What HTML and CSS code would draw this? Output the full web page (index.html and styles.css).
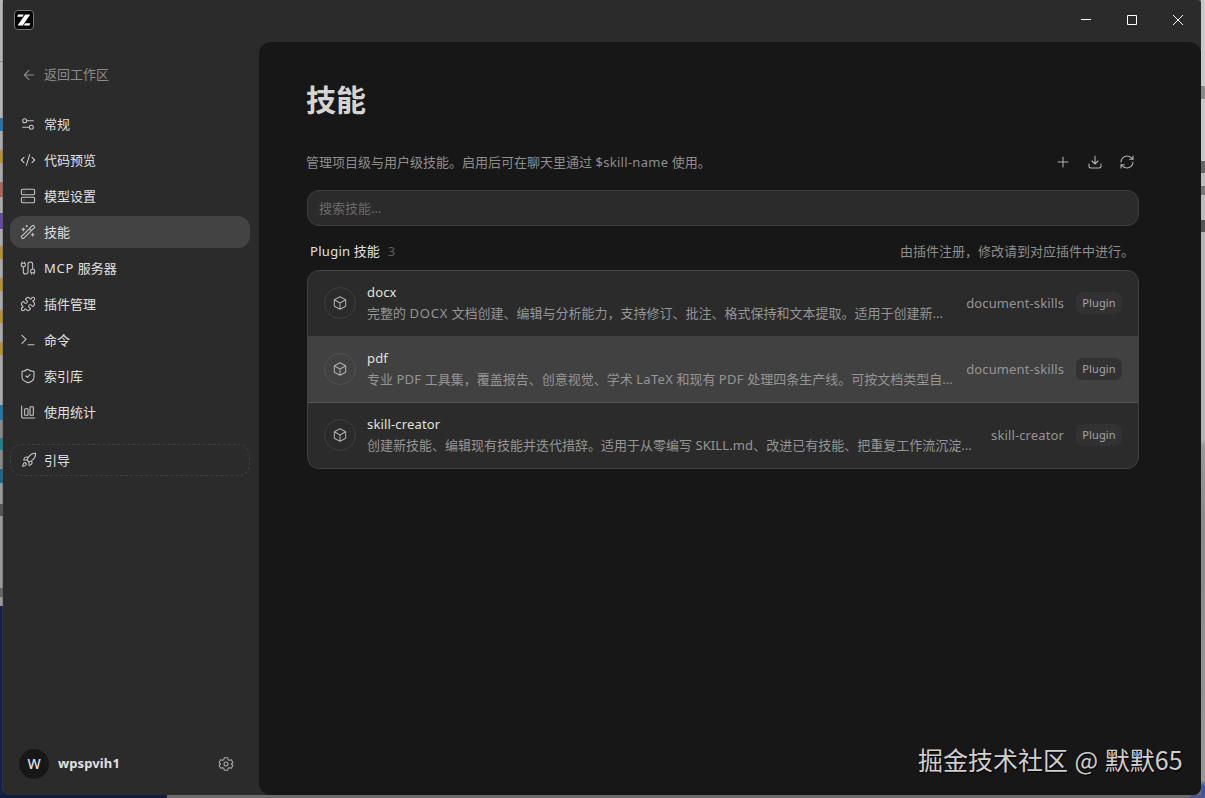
FILE: index.html
```
<!DOCTYPE html>
<html lang="zh-CN">
<head>
<meta charset="utf-8">
<title>技能</title>
<link rel="stylesheet" href="styles.css">
</head>
<body>
<svg class="defs" width="0" height="0">
  <symbol id="box" viewBox="0 0 24 24"><path d="M12 2.500 20.500 7v10L12 21.500 3.500 17V7zM3.500 7 12 12l8.500-5M12 12v9.500"/></symbol>
</svg>
<div class="desktop">
  <div class="edge edge-left"></div>
  <div class="window">
    <header class="titlebar">
      <svg class="logo" viewBox="0 0 20 20"><rect x=".5" y=".5" width="19" height="19" rx="3.500" fill="#000" stroke="#777"/><path d="M4 4.500h5.800L8.600 6.700H3.200zM11.200 4.500h5L8.800 15.500H3.500zM11.200 13.300h5.200l-1 2.200H9.700z" fill="#fff"/></svg>
      <div class="controls">
        <svg viewBox="0 0 12 12"><path d="M1 5.500h10"/></svg>
        <svg viewBox="0 0 12 12"><path d="M1.500 1.500h9v9h-9z"/></svg>
        <svg viewBox="0 0 12 12"><path d="m1 1 10 10M11 1 1 11"/></svg>
      </div>
    </header>
    <div class="body">
      <aside class="sidebar">
        <a class="back"><svg class="ic" viewBox="0 0 24 24"><path d="m12 19-7-7 7-7M19 12H5"/></svg>返回工作区</a>
        <nav class="nav">
          <a class="item"><svg class="ic" viewBox="0 0 24 24"><path d="M14 17H4M20 7h-10"/><circle cx="17" cy="17" r="3"/><circle cx="7" cy="7" r="3"/></svg>常规</a>
          <a class="item"><svg class="ic" viewBox="0 0 24 24"><path d="m18 16 4-4-4-4M6 8l-4 4 4 4M14.500 4l-5 16"/></svg>代码预览</a>
          <a class="item"><svg class="ic" viewBox="0 0 24 24"><rect x="2" y="2" width="20" height="8" rx="2"/><rect x="2" y="14" width="20" height="8" rx="2"/><path d="M6 6h.01M6 18h.01"/></svg>模型设置</a>
          <a class="item active"><svg class="ic" viewBox="0 0 24 24"><path d="m21.640 3.640-1.280-1.280a1.210 1.210 0 0 0-1.720 0L2.360 18.640a1.210 1.210 0 0 0 0 1.720l1.280 1.280a1.200 1.200 0 0 0 1.720 0L21.640 5.360a1.200 1.200 0 0 0 0-1.720M14 7l3 3M5 6v4M19 14v4M10 2v2M7 8H3M21 16h-4M11 3H9"/></svg>技能</a>
          <a class="item"><svg class="ic" viewBox="0 0 24 24"><path d="M17 19a1 1 0 0 1-1-1v-2a2 2 0 0 1 2-2h2a2 2 0 0 1 2 2v2a1 1 0 0 1-1 1zM17 21v-2M19 14V6.500a1 1 0 0 0-7 0v11a1 1 0 0 1-7 0V10M21 21v-2M3 5V3M4 10a2 2 0 0 1-2-2V6a1 1 0 0 1 1-1h4a1 1 0 0 1 1 1v2a2 2 0 0 1-2 2zM7 5V3"/></svg><span><span class="caps">MCP</span> 服务器</span></a>
          <a class="item"><svg class="ic" viewBox="0 0 24 24"><path d="M15.390 4.390a1 1 0 0 0 1.680-.474 2.500 2.500 0 1 1 3.014 3.015 1 1 0 0 0-.474 1.680l1.683 1.682a2.414 2.414 0 0 1 0 3.414L19.610 15.390a1 1 0 0 1-1.680-.474 2.500 2.500 0 1 0-3.014 3.015 1 1 0 0 1 .474 1.680l-1.683 1.682a2.414 2.414 0 0 1-3.414 0L8.610 19.610a1 1 0 0 0-1.680.474 2.500 2.500 0 1 1-3.014-3.015 1 1 0 0 0 .474-1.680l-1.683-1.682a2.414 2.414 0 0 1 0-3.414L4.390 8.610a1 1 0 0 1 1.680.474 2.500 2.500 0 1 0 3.014-3.015 1 1 0 0 1-.474-1.680l1.683-1.682a2.414 2.414 0 0 1 3.414 0z"/></svg>插件管理</a>
          <a class="item"><svg class="ic" viewBox="0 0 24 24"><path d="M12 19h9M3 17l6-6-6-6"/></svg>命令</a>
          <a class="item"><svg class="ic" viewBox="0 0 24 24"><path d="M21 13c0 5-3.500 7.500-8.340 8.950a1 1 0 0 1-.67-.01C7.500 20.500 3 18 3 13V6a1 1 0 0 1 1-1c2 0 4.500-1.200 6.240-2.720a1.170 1.170 0 0 1 1.520 0C14.510 3.810 18 5 20 5a1 1 0 0 1 1 1zM9 12l2 2 4-4"/></svg>索引库</a>
          <a class="item"><svg class="ic" viewBox="0 0 24 24"><path d="M2.500 3v16a2 2 0 0 0 2 2H22"/><rect x="15" y="4" width="5" height="13" rx="1"/><rect x="7" y="7" width="5" height="10" rx="1"/></svg>使用统计</a>
        </nav>
        <a class="item guide"><svg class="ic" viewBox="0 0 24 24"><path d="M4.500 16.500c-1.500 1.260-2 5-2 5s3.740-.5 5-2c.71-.84.7-2.130-.09-2.910a2.180 2.180 0 0 0-2.910-.09M12 15l-3-3a22 22 0 0 1 2-3.950A12.880 12.880 0 0 1 22 2c0 2.720-.78 7.500-6 11a22.350 22.350 0 0 1-4 2M9 12H4s.55-3.030 2-4c1.620-1.080 5 0 5 0M12 15v5s3.030-.55 4-2c1.080-1.620 0-5 0-5"/></svg>引导</a>
        <div class="user">
          <span class="avatar">W</span><b class="username">wpspvih1</b>
          <svg class="ic gear" viewBox="0 0 24 24"><path d="M9.500 2.500h5l.8 3 1.700 1 3-.9 2.300 4.200-2.200 2.200 2.200 2.200-2.300 4.200-3-.9-1.700 1-.8 3h-5l-.8-3-1.700-1-3 .9-2.300-4.200L3.900 12 1.700 9.800 4 5.600l3 .9 1.700-1z"/><circle cx="12" cy="12" r="3"/></svg>
        </div>
      </aside>
      <main class="main">
        <h1 class="title">技能</h1>
        <div class="intro">
          <p class="intro-text">管理项目级与用户级技能。启用后可在聊天里通过 <span class="en">$skill-name</span> 使用。</p>
          <div class="actions">
            <svg class="ic" viewBox="0 0 24 24"><path d="M4.500 12h15M12 4.500v15"/></svg>
            <svg class="ic" viewBox="0 0 24 24"><path d="M12 3v12M7.500 10.500 12 15l4.500-4.500M3 15v3a3 3 0 0 0 3 3h12a3 3 0 0 0 3-3v-3"/></svg>
            <svg class="ic" viewBox="0 0 24 24"><path d="M3 12a9 9 0 0 1 9-9 9.750 9.750 0 0 1 6.740 2.740L21 8M21 3v5h-5M21 12a9 9 0 0 1-9 9 9.750 9.750 0 0 1-6.740-2.740L3 16M8 16H3v5"/></svg>
          </div>
        </div>
        <div class="search">搜索技能...</div>
        <div class="section"><h2 class="section-name"><span class="wide">Plugin</span> 技能</h2><span class="count">3</span><span class="note">由插件注册，修改请到对应插件中进行。</span></div>
        <div class="list">
          <div class="row">
            <span class="disc"><svg class="ic"><use href="#box"/></svg></span>
            <div class="info"><div class="name">docx</div><div class="desc">完整的 <span class="caps">DOCX</span> 文档创建、编辑与分析能力，支持修订、批注、格式保持和文本提取。适用于创建新...</div></div>
            <span class="source">document-skills</span><span class="badge">Plugin</span>
          </div>
          <div class="row hover">
            <span class="disc"><svg class="ic"><use href="#box"/></svg></span>
            <div class="info"><div class="name">pdf</div><div class="desc">专业 <span class="wide">PDF</span> 工具集，覆盖报告、创意视觉、学术 <span class="wide">LaTeX</span> 和现有 <span class="wide">PDF</span> 处理四条生产线。可按文档类型自...</div></div>
            <span class="source">document-skills</span><span class="badge">Plugin</span>
          </div>
          <div class="row">
            <span class="disc"><svg class="ic"><use href="#box"/></svg></span>
            <div class="info"><div class="name">skill-creator</div><div class="desc">创建新技能、编辑现有技能并迭代措辞。适用于从零编写 <span class="en">SKILL.md</span>、改进已有技能、把重复工作流沉淀...</div></div>
            <span class="source">skill-creator</span><span class="badge">Plugin</span>
          </div>
        </div>
      </main>
    </div>
  </div>
  <div class="edge edge-right"></div>
  <div class="edge edge-bottom"></div>
  <div class="watermark">掘金技术社区 @ 默默65</div>
</div>
</body>
</html>
```
FILE: styles.css
```
* { box-sizing: border-box; }
body { margin: 0; overflow: hidden; background: #6b6b6b; }
h1, h2, p { margin: 0; font-weight: 400; }
.defs { display: block; position: absolute; }
.desktop {
  position: relative;
  display: grid;
  grid-template: 795px 3px / 3px 1198px 4px;
  width: 1205px;
  height: 798px;
  font: 13px/20px "Noto Sans", "Noto Sans CJK SC", sans-serif;
  color: #e0e0e0;
  background: linear-gradient(90deg, #111d40 167px, #6b6b6b 167px);
  white-space: nowrap;
}
.edge-left {
  background: linear-gradient(#b5b5b5 0 61px, #888 61px 62px, #b5b5b5 62px 118px, #1f77b4 118px 131px, #aaa 131px 150px, #b99030 150px 163px, #aaa 163px 182px, #b4615b 182px 197px, #aaa 197px 213px, #6748ad 213px 229px, #aaa 229px 246px, #b99030 246px 259px, #aaa 259px 278px, #b99030 278px 291px, #aaa 291px 310px, #b99030 310px 323px, #aaa 323px 342px, #b99030 342px 355px, #aaa 355px 405px, #1b78b0 405px 420px, #888 420px 438px, #14868c 438px 450px, #888 450px 469px, #18688f 469px 483px, #999 483px 504px, #555 504px 516px, #999 516px 588px, #666 588px 597px, #999 597px 606px, #14224b 606px);
}
.edge-right {
  background: linear-gradient(#c8c8c8 0 86px, #888 86px 99px, #c8c8c8 99px 161px, #666 161px 173px, #bbb 173px 186px, #777 186px 195px, #bbb 195px 220px, #555 220px 232px, #b5b5b5 232px 440px, #999 445px, #888 530px, #999 780px, #40549a 786px);
}
.edge-bottom { grid-column: 1 / -1; background: linear-gradient(90deg, #111d40 167px, #6b6b6b 167px 1190px, #4b5b91 1190px); }
.window {
  display: flex;
  flex-direction: column;
  background: #2b2b2b;
  border-radius: 4px 4px 8px 8px;
  box-shadow: 0 0 0 1px rgba(90, 90, 90, .35);
  overflow: hidden;
}
.titlebar { display: flex; justify-content: space-between; height: 42px; padding: 10px 17px 0 11px; }
.logo { width: 20px; height: 20px; }
.controls { display: flex; gap: 34px; padding-top: 4px; }
.controls svg { width: 12px; height: 12px; fill: none; stroke: #fff; stroke-width: 1; }
.body { display: flex; flex: 1; }
.ic { width: 16px; height: 16px; flex: none; fill: none; stroke: currentColor; stroke-width: 1.6; stroke-linecap: round; stroke-linejoin: round; }
.en { letter-spacing: .12px; }
.wide { letter-spacing: .3px; }
.caps { letter-spacing: .8px; }
.sidebar { display: flex; flex-direction: column; width: 256px; padding: 16px 9px 15px 7px; }
.back, .item { display: flex; align-items: center; height: 32px; padding: 0 10px; gap: 8px; border-radius: 12px; }
.back { color: #8b8b8b; padding-left: 11px; gap: 7px; }
.back .ic { margin-top: 2px; }
.nav { display: flex; flex-direction: column; gap: 4px; margin-top: 18px; }
.item .ic { color: #c8c8c8; }
.active { background: #434343; }
.guide { margin-top: 16px; padding-left: 10px; gap: 7px; border: 1px dashed #404040; }
.user { display: flex; align-items: center; height: 32px; margin-top: auto; padding: 0 16px 0 9px; }
.avatar { width: 30px; height: 30px; border-radius: 50%; background: #171717; text-align: center; line-height: 29px; font-size: 14px; font-weight: 500; }
.username { margin-left: 9px; font-weight: 700; letter-spacing: .12px; line-height: 18px; padding-bottom: 2px; }
.gear { margin-left: auto; color: #aaa; }
.main { flex: 1; padding: 36px 62px 0 48px; background: #171717; border-radius: 12px 12px 0 12px; }
.title { font: 700 30px/40px "Noto Sans CJK SC", sans-serif; color: #d4d4d4; margin-left: -1px; }
.intro { display: flex; align-items: center; justify-content: space-between; height: 32px; margin-top: 28px; margin-left: -1px; padding-right: 4px; color: #8e8e8e; }
.intro-text .en { letter-spacing: .3px; }
.actions { display: flex; gap: 16px; color: #b0b0b0; }
.search { height: 36px; margin-top: 12px; padding: 0 11px; line-height: 34px; color: #6a6a6a; background: #2b2b2b; border: 1px solid #3f3f3f; border-radius: 12px; }
.section { display: flex; height: 20px; margin-top: 15px; padding: 0 5px 0 3px; }
.section-name { font-size: 13px; }
.count { margin-left: 8px; color: #5e5e5e; }
.note { margin-left: auto; color: #8e8e8e; }
.list { margin-top: 9px; border: 1px solid #414141; border-radius: 12px; background: #2b2b2b; overflow: hidden; }
.row { display: flex; align-items: center; height: 66px; padding: 0 16px 1px; border-bottom: 1px solid #414141; }
.row:last-child { height: 65px; border-bottom: 0; }
.hover { background: #414141; border-bottom-color: #555; }
.disc { display: grid; place-items: center; width: 32px; height: 32px; border: 1px solid rgba(255, 255, 255, .09); border-radius: 50%; color: #aaa; }
.info { flex: 1; min-width: 0; margin-left: 11px; }
.name { line-height: 20px; letter-spacing: .15px; }
.desc { line-height: 22px; color: #959595; }
.source { color: #959595; letter-spacing: .12px; }
.badge { width: 46px; height: 22px; margin-left: 12px; border-radius: 7px; background: #323232; color: #a5a5a5; font-size: 11px; letter-spacing: .15px; line-height: 22px; text-align: center; }
.watermark { position: absolute; left: 918px; top: 741px; font: 25px/36px "Noto Sans CJK SC", sans-serif; word-spacing: 1px; color: #cfcfcf; text-shadow: 1px 1px 1px #000; }
```
